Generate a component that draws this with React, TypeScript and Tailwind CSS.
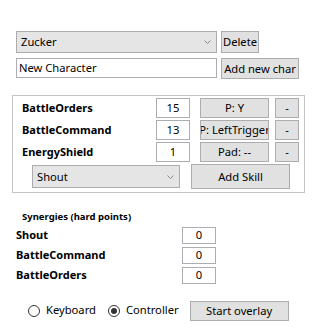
import React from 'react';

const font = { fontFamily: '"Noto Sans", "Open Sans", sans-serif' };

function Chevron() {
  return (
    <svg width="7" height="4" viewBox="0 0 7 4" className="shrink-0">
      <path d="M0.5 0.5 L3.5 3.5 L6.5 0.5" fill="none" stroke="#8a8a8a" strokeWidth="1" />
    </svg>
  );
}

function Combo({ value, className }: { value: string; className: string }) {
  return (
    <div className={`flex items-center justify-between border border-[#acacac] bg-[#e5e5e5] pl-[4px] pr-[5px] ${className}`}>
      <span className="leading-none">{value}</span>
      <Chevron />
    </div>
  );
}

function NumBox({ value, className }: { value: string; className: string }) {
  return (
    <div className={`flex items-center justify-center border border-[#abadb3] bg-white leading-none ${className}`}>
      {value}
    </div>
  );
}

function Btn({ label, className }: { label: string; className: string }) {
  return (
    <div className={`flex items-center justify-center overflow-hidden whitespace-nowrap border border-[#adadad] bg-[#e1e1e1] leading-none ${className}`}>
      {label}
    </div>
  );
}

const skills = [
  { name: 'BattleOrders', level: '15', key: 'P: Y' },
  { name: 'BattleCommand', level: '13', key: 'P: LeftTrigger' },
  { name: 'EnergyShield', level: '1', key: 'Pad: --' },
];

const synergies = [
  { name: 'Shout', pts: '0' },
  { name: 'BattleCommand', pts: '0' },
  { name: 'BattleOrders', pts: '0' },
];

export default function App() {
  return (
    <div className="w-[319px] h-[331px] bg-white text-black text-[11.2px] flex flex-col overflow-hidden" style={font}>
      {/* character picker */}
      <div className="flex mt-[31px] ml-[16px]">
        <Combo value="Zucker" className="w-[201px] h-[22px]" />
        <Btn label="Delete" className="ml-[4px] w-[38px] h-[22px] border-[#707070]" />
      </div>
      <div className="flex mt-[5px] ml-[16px]">
        <div className="w-[201px] h-[20px] border border-[#abadb3] bg-white flex items-center pl-[2px] leading-none">New Character</div>
        <Btn label="Add new char" className="ml-[4px] w-[78px] h-[21px] border-[#707070]" />
      </div>

      {/* skills group */}
      <div className="mt-[16px] ml-[12px] w-[293px] h-[98px] border border-[#c4c4c4] flex flex-col pt-[2px]">
        {skills.map(s => (
          <div key={s.name} className="flex items-center h-[20px] mb-[2px]">
            <div className="w-[143px] pl-[9px] font-bold text-[11px]">{s.name}</div>
            <NumBox value={s.level} className="w-[34px] h-[20px]" />
            <Btn label={s.key} className="ml-[10px] w-[69px] h-[20px]" />
            <Btn label="-" className="ml-[6px] w-[24px] h-[20px]" />
          </div>
        ))}
        <div className="flex items-center">
          <Combo value="Shout" className="ml-[19px] w-[148px] h-[23px]" />
          <Btn label="Add Skill" className="ml-[11px] w-[99px] h-[25px] border-[#8c8c8c]" />
        </div>
      </div>

      {/* synergies */}
      <div className="mt-[19px] ml-[22px] text-[9.5px] font-bold leading-none">Synergies (hard points)</div>
      <div className="mt-[5px] flex flex-col gap-[3px]">
        {synergies.map(s => (
          <div key={s.name} className="flex items-center h-[17px]">
            <div className="w-[182px] pl-[16px] font-bold text-[11px]">{s.name}</div>
            <NumBox value={s.pts} className="w-[34px] h-[17px]" />
          </div>
        ))}
      </div>

      {/* input mode */}
      <div className="mt-[17px] ml-[28px] flex items-center">
        <div className="w-[12px] h-[12px] rounded-full border border-[#333]" />
        <span className="ml-[6px]">Keyboard</span>
        <div className="ml-[12px] w-[12px] h-[12px] rounded-full border border-[#333] flex items-center justify-center">
          <div className="w-[6px] h-[6px] rounded-full bg-[#333]" />
        </div>
        <span className="ml-[6px]">Controller</span>
        <Btn label="Start overlay" className="ml-[11px] w-[99px] h-[20px]" />
      </div>
    </div>
  );
}
